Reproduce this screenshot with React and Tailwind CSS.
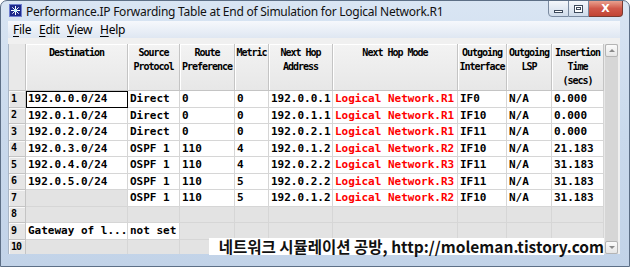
import React from "react";

const cols = [
  { w: "w-[102px]", label: ["Destination"] },
  { w: "w-[52px]", label: ["Source", "Protocol"] },
  { w: "w-[55px]", label: ["Route", "Preference"] },
  { w: "w-[34px]", label: ["Metric"] },
  { w: "w-[64px]", label: ["Next Hop", "Address"] },
  { w: "w-[125px]", label: ["Next Hop Mode"] },
  { w: "w-[49px]", label: ["Outgoing", "Interface"] },
  { w: "w-[45px]", label: ["Outgoing", "LSP"] },
  { w: "w-[52px]", label: ["Insertion", "Time", "(secs)"] },
];

const R1 = "Logical Network.R1";
const R2 = "Logical Network.R2";
const R3 = "Logical Network.R3";

const rows = [
  ["192.0.0.0/24", "Direct", "0", "0", "192.0.0.1", R1, "IF0", "N/A", "0.000"],
  ["192.0.1.0/24", "Direct", "0", "0", "192.0.1.1", R1, "IF10", "N/A", "0.000"],
  ["192.0.2.0/24", "Direct", "0", "0", "192.0.2.1", R1, "IF11", "N/A", "0.000"],
  ["192.0.3.0/24", "OSPF 1", "110", "4", "192.0.1.2", R2, "IF10", "N/A", "21.183"],
  ["192.0.4.0/24", "OSPF 1", "110", "4", "192.0.2.2", R3, "IF11", "N/A", "31.183"],
  ["192.0.5.0/24", "OSPF 1", "110", "5", "192.0.2.2", R3, "IF11", "N/A", "31.183"],
  [null, "OSPF 1", "110", "5", "192.0.1.2", R2, "IF10", "N/A", "31.183"],
  [null, null, null, null, null, null, null, null, null],
  ["Gateway of l...", "not set", null, null, null, null, null, null, null],
  [null, null, null, null, null, null, null, null, null],
];

const mono = { fontFamily: '"DejaVu Sans Mono", "Liberation Mono", monospace' };
const ui = { fontFamily: '"Noto Sans", "Open Sans", sans-serif' };

function AppIcon() {
  return (
    <svg width="13" height="13" viewBox="0 0 13 13">
      <rect x="0" y="0" width="13" height="13" fill="#1d2a8c" />
      <rect x="0.5" y="0.5" width="12" height="12" fill="none" stroke="#6f7fd0" strokeWidth="1" />
      <g stroke="#ffffff" strokeWidth="1">
        <line x1="6.5" y1="2" x2="6.5" y2="11" />
        <line x1="2" y1="6.5" x2="11" y2="6.5" />
        <line x1="3.3" y1="3.3" x2="9.7" y2="9.7" />
        <line x1="9.7" y1="3.3" x2="3.3" y2="9.7" />
      </g>
      <circle cx="6.5" cy="6.5" r="1.6" fill="#bff4ff" />
    </svg>
  );
}

function MenuItem({ first, rest, w }) {
  return (
    <span className={`${w} shrink-0 text-[12px] tracking-[-0.25px] text-black leading-none`}>
      <span className="underline underline-offset-2">{first}</span>
      {rest}
    </span>
  );
}

function Cell({ value, col, isFocus }) {
  const empty = value === null;
  const red = col === 5;
  return (
    <div
      className={`h-[16.5px] shrink-0 border-r border-b border-[#d6d6d6] flex items-center pl-[2px] overflow-hidden whitespace-nowrap text-[11px] font-bold leading-none ${cols[col].w} ${
        empty ? "bg-[#e3e3e3]" : "bg-white"
      } ${red ? "text-[#ff0000]" : "text-black"} ${isFocus ? "outline outline-1 outline-black -outline-offset-1" : ""}`}
      style={mono}
    >
      {value}
    </div>
  );
}

export default function App() {
  return (
    <div className="w-[630px] h-[267px] bg-white">
      <div className="relative w-[630px] h-[267px] overflow-hidden rounded-t-[7px] border border-[#5d6f86] bg-gradient-to-b from-[#d9e5f3] via-[#c9d9ec] to-[#c2d3e8]">
        {/* Title bar */}
        <div className="h-[20px] flex items-start">
          <div className="ml-[8px] mt-[3px]">
            <AppIcon />
          </div>
          <div className="ml-[4px] mt-[2px] text-[12px] text-[#111] tracking-[-0.25px] whitespace-nowrap" style={ui}>
            Performance.IP Forwarding Table at End of Simulation for Logical Network.R1
          </div>
          <div className="flex-1" />
          <div className="flex mr-[6px] -mt-px">
            <div className="w-[21px] h-[17px] rounded-bl-[4px] border border-[#7a8aa0] bg-gradient-to-b from-[#f4f7fb] to-[#cfdbea] flex items-center justify-center">
              <div className="w-[9px] h-[3px] border border-[#3d4a5c] bg-white mt-[5px]" />
            </div>
            <div className="w-[20px] h-[17px] border-y border-r border-[#7a8aa0] bg-gradient-to-b from-[#f4f7fb] to-[#cfdbea] flex items-center justify-center">
              <div className="w-[9px] h-[8px] border border-[#3d4a5c] bg-white flex items-center justify-center">
                <div className="w-[5px] h-[3px] border border-[#3d4a5c]" />
              </div>
            </div>
            <div className="w-[34px] h-[17px] rounded-br-[4px] border-y border-r border-[#7a3a30] bg-gradient-to-b from-[#e9a08f] via-[#d0584a] to-[#c24434] flex items-center justify-center">
              <span className="text-white text-[11px] font-bold leading-none" style={{ fontFamily: '"DejaVu Sans", sans-serif' }}>
                X
              </span>
            </div>
          </div>
        </div>

        {/* Client area */}
        <div className="ml-[7px] w-[612px] h-[233px] flex flex-col bg-[#f2f4f7]">
          {/* Menu bar */}
          <div
            className="h-[17px] shrink-0 flex items-center pl-[5px] bg-gradient-to-b from-[#f6f8fc] to-[#dfe7f2]"
            style={ui}
          >
            <MenuItem first="F" rest="ile" w="w-[26px]" />
            <MenuItem first="E" rest="dit" w="w-[28px]" />
            <MenuItem first="V" rest="iew" w="w-[33px]" />
            <MenuItem first="H" rest="elp" w="w-[30px]" />
          </div>
          <div className="h-[6px] shrink-0 bg-[#f0f0f0]" />

          {/* Table area */}
          <div className="flex h-[210px] overflow-hidden">
            <div className="flex flex-col w-[596px] shrink-0 border-l border-[#a9b6c6]">
              {/* Header */}
              <div className="flex h-[47px] shrink-0">
                <div className="w-[17px] shrink-0 bg-[#e9e9e9] border-r border-b border-[#c4c4c4]" />
                {cols.map((c, i) => (
                  <div
                    key={i}
                    className={`${c.w} shrink-0 h-[47px] bg-gradient-to-b from-[#f3f3f3] to-[#e7e7e7] border-r border-b border-[#c4c4c4] shadow-[inset_1px_1px_0_#ffffff] flex flex-col items-center pt-[2px] text-[10px] font-bold leading-[14px] tracking-[-1px] text-black`}
                    style={mono}
                  >
                    {c.label.map((l, j) => (
                      <div key={j} className="whitespace-pre">{l}</div>
                    ))}
                  </div>
                ))}
              </div>
              {/* Rows */}
              {rows.map((r, ri) => (
                <div key={ri} className="flex shrink-0">
                  <div
                    className="w-[17px] h-[16.5px] shrink-0 bg-[#e6e6e6] border-r border-b border-[#c4c4c4] shadow-[inset_1px_1px_0_#f8f8f8] flex items-center pl-[2px] text-[10px] font-bold leading-none tracking-[-1px] text-black"
                    style={mono}
                  >
                    {ri + 1}
                  </div>
                  {r.map((v, ci) => (
                    <Cell key={ci} value={v} col={ci} isFocus={ri === 0 && ci === 0} />
                  ))}
                </div>
              ))}
            </div>

            {/* Scrollbar */}
            <div className="w-[14px] shrink-0 flex flex-col bg-[#d6d6d6] border-l border-[#e8e8e8]">
              <div className="h-[13px] shrink-0 rounded-[2px] border border-[#b4b4b4] bg-gradient-to-b from-[#fbfbfb] to-[#e6e6e6] flex items-center justify-center">
                <div className="w-0 h-0 border-l-[3px] border-r-[3px] border-b-[3px] border-l-transparent border-r-transparent border-b-[#8a8a8a]" />
              </div>
              <div className="flex-1" />
              <div className="h-[13px] shrink-0 rounded-[2px] border border-[#b4b4b4] bg-gradient-to-b from-[#fbfbfb] to-[#e6e6e6] flex items-center justify-center">
                <div className="w-0 h-0 border-l-[3px] border-r-[3px] border-t-[3px] border-l-transparent border-r-transparent border-t-[#8a8a8a]" />
              </div>
            </div>
            <div className="w-[2px] shrink-0 bg-[#f0f0f0]" />
          </div>
        </div>

        {/* Watermark overlay */}
        <div
          className="absolute left-[208px] w-[395px] top-[237px] h-[17px] bg-white flex items-center justify-end text-[15.5px] font-bold text-[#111] leading-none whitespace-nowrap"
          style={{ fontFamily: '"Noto Sans CJK KR", "Noto Sans", sans-serif' }}
        >
          네트워크 시뮬레이션 공방, http://moleman.tistory.com
        </div>
      </div>
    </div>
  );
}
